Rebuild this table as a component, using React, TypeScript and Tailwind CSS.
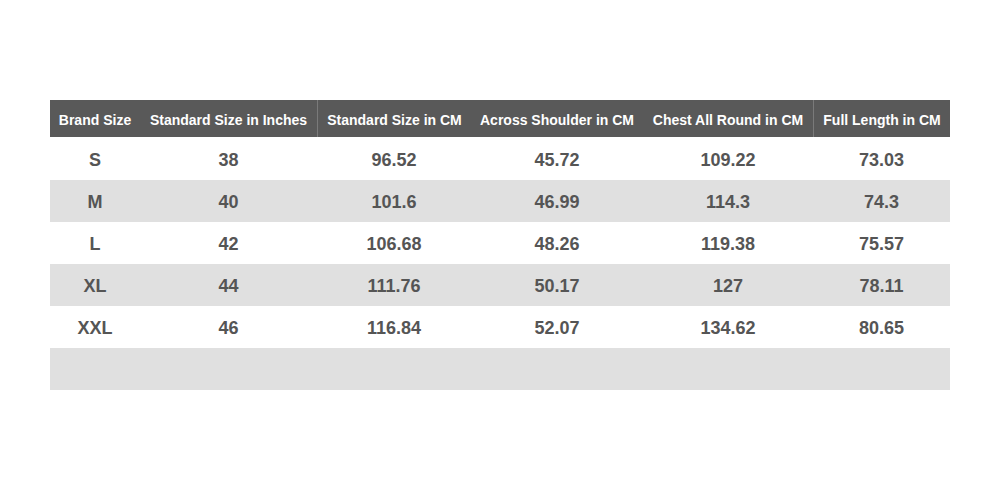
const headers = [
  "Brand Size",
  "Standard Size in Inches",
  "Standard Size in CM",
  "Across Shoulder in CM",
  "Chest All Round in CM",
  "Full Length in CM",
];

const rows = [
  ["S", "38", "96.52", "45.72", "109.22", "73.03"],
  ["M", "40", "101.6", "46.99", "114.3", "74.3"],
  ["L", "42", "106.68", "48.26", "119.38", "75.57"],
  ["XL", "44", "111.76", "50.17", "127", "78.11"],
  ["XXL", "46", "116.84", "52.07", "134.62", "80.65"],
  ["", "", "", "", "", ""],
];

// header cells that carry the faint divider on their left
const dividers = [2, 5];

const App = () => {
  return (
    <div
      className="w-[1000px] h-[490px] bg-white pt-[100px] px-[50px]"
      style={{ fontFamily: '"Liberation Sans", Arial, sans-serif' }}
    >
      <div className="grid grid-cols-[90px_177px_154px_172px_170px_137px] w-[900px]">
        {/* Header */}
        {headers.map((h, i) => (
          <div
            key={h}
            className={`h-[37px] pt-[3px] bg-[#595959] text-white font-bold text-[14px] flex items-center justify-center whitespace-nowrap ${
              dividers.includes(i) ? "border-l border-[#7a7a7a]" : ""
            }`}
          >
            {h}
          </div>
        ))}

        {/* Body */}
        {rows.map((row, r) =>
          row.map((cell, c) => (
            <div
              key={`${r}-${c}`}
              className={`h-[42px] pt-[3px] flex items-center justify-center font-bold text-[18px] text-[#555555] ${
                r % 2 === 1 ? "bg-[#e0e0e0]" : "bg-white"
              } ${r === 0 ? "h-[43px]" : ""}`}
            >
              {cell}
            </div>
          ))
        )}
      </div>
    </div>
  );
};

export default App;
